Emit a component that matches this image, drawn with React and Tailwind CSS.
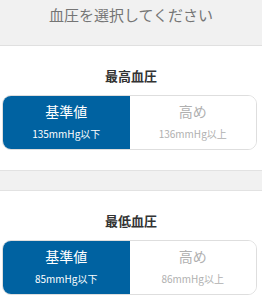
export default function App() {
  const sections = [
    { title: '最高血圧', low: '135mmHg以下', high: '136mmHg以上' },
    { title: '最低血圧', low: '85mmHg以下', high: '86mmHg以上' },
  ];

  return (
    <div className="w-[262px] h-[300px] overflow-hidden bg-white" style={{ fontFamily: '"Noto Sans CJK JP", "Noto Sans", sans-serif' }}>
      {/* Header */}
      <div className="h-[46px] bg-[#f1f1f1] border-b border-[#e0e0e0] flex justify-center pt-[3px]">
        <h1 className="text-[15px] leading-[24px] text-[#757575]">血圧を選択してください</h1>
      </div>

      {sections.map((s, i) => (
        <div key={s.title}>
          {i > 0 && <div className="h-[21px] bg-[#f1f1f1] border-y border-[#e2e2e2]" />}
          <div className="pt-[21px] pb-[20px] px-[2px]">
            <p className="text-center text-[13px] leading-[18px] font-bold text-[#333]">{s.title}</p>
            <div className="mt-[10px] mr-[3px] h-[55px] flex rounded-[9px] border border-[#dedede] overflow-hidden">
              <button className="flex-1 bg-[#0062a1] text-white flex flex-col items-center pt-[6px]">
                <span className="text-[14px] leading-[18px]">基準値</span>
                <span className="text-[10px] leading-[14px] mt-[7px]">{s.low}</span>
              </button>
              <button className="flex-1 bg-white text-[#b0b0b0] flex flex-col items-center pt-[6px]">
                <span className="text-[14px] leading-[18px]">高め</span>
                <span className="text-[10px] leading-[14px] mt-[7px]">{s.high}</span>
              </button>
            </div>
          </div>
        </div>
      ))}
    </div>
  );
}
